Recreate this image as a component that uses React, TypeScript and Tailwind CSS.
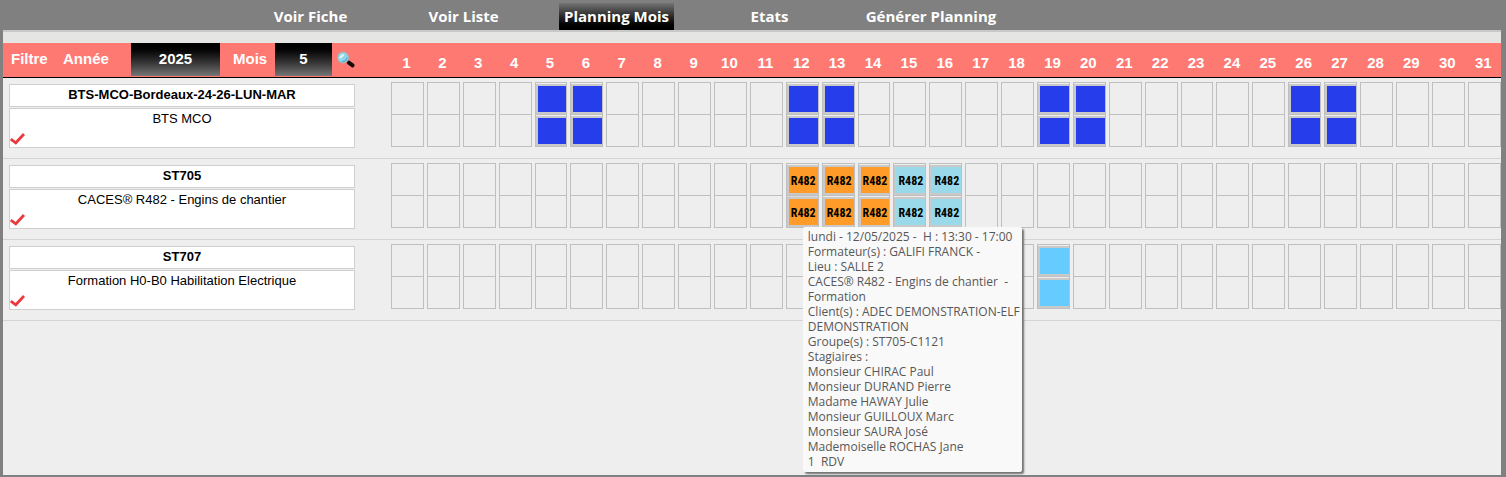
import { useState } from 'react';
import clsx from 'clsx';

type SlotKind = 'course' | 'caces' | 'cacesAlt' | 'habilitation';

interface Slot {
  kind: SlotKind;
  label?: string;
}

interface Group {
  code: string;
  title: string;
  slots: Record<number, Slot>;
  hoveredDay?: number;
}

const MENU = [
  { label: 'Voir Fiche', width: 'w-[153px]' },
  { label: 'Voir Liste', width: 'w-[153px]' },
  { label: 'Planning Mois', width: 'w-[153px]' },
  { label: 'Etats', width: 'w-[153px]' },
  { label: 'Générer Planning', width: 'w-[170px]' },
];

const DAYS = Array.from({ length: 31 }, (_, i) => i + 1);
const HALF_DAYS = ['am', 'pm'];

const SLOT_COLORS: Record<SlotKind, string> = {
  course: 'bg-[#263dec]',
  caces: 'bg-[#ff9b28]',
  cacesAlt: 'bg-[#99d9ea]',
  habilitation: 'bg-[#66ccff]',
};

const course: Slot = { kind: 'course' };
const caces: Slot = { kind: 'caces', label: 'R482' };
const cacesAlt: Slot = { kind: 'cacesAlt', label: 'R482' };

const GROUPS: Group[] = [
  {
    code: 'BTS-MCO-Bordeaux-24-26-LUN-MAR',
    title: 'BTS MCO',
    slots: { 5: course, 6: course, 12: course, 13: course, 19: course, 20: course, 26: course, 27: course },
  },
  {
    code: 'ST705',
    title: 'CACES® R482 - Engins de chantier',
    slots: { 12: caces, 13: caces, 14: caces, 15: cacesAlt, 16: cacesAlt },
    hoveredDay: 12,
  },
  {
    code: 'ST707',
    title: 'Formation H0-B0 Habilitation Electrique',
    slots: { 19: { kind: 'habilitation' } },
  },
];

const TOOLTIP_LINES = [
  'lundi - 12/05/2025 -  H : 13:30 - 17:00',
  'Formateur(s) : GALIFI FRANCK -',
  'Lieu : SALLE 2',
  'CACES® R482 - Engins de chantier  -',
  'Formation',
  'Client(s) : ADEC DEMONSTRATION-ELF',
  'DEMONSTRATION',
  'Groupe(s) : ST705-C1121',
  'Stagiaires :',
  'Monsieur CHIRAC Paul',
  'Monsieur DURAND Pierre',
  'Madame HAWAY Julie',
  'Monsieur GUILLOUX Marc',
  'Monsieur SAURA José',
  'Mademoiselle ROCHAS Jane',
  '1  RDV',
];

function SearchIcon() {
  return (
    <svg className="h-[18px] w-5" viewBox="0 0 20 18" fill="none">
      <path d="M10.500 9.500l2.500 2" stroke="#9a8a8a" strokeWidth="1.600" />
      <path d="M12.800 11.600l3.800 2.800" stroke="#140c0c" strokeWidth="4" strokeLinecap="round" />
      <circle cx="7" cy="6.500" r="5.400" fill="#8fd6ea" stroke="#a9b4b8" strokeWidth="1.200" />
      <path d="M3.200 7.700c.2-2.800 2.200-4.800 5.200-4.800-.6 2.400-2.400 4.200-5.200 4.800z" fill="#dff6fc" />
      <path d="M5.500 10.500c3 .4 5-1.200 5.600-4" stroke="#4fb4d2" strokeWidth="1.200" />
    </svg>
  );
}

function CheckIcon() {
  return (
    <svg className="h-3 w-[15px]" viewBox="0 0 15 12" fill="none">
      <path d="M.8 6L5.800 9.800L14 1" stroke="#ea3a40" strokeWidth="2.800" />
    </svg>
  );
}

function MenuBar() {
  return (
    <nav className="flex h-8 items-end border-b-2 border-[#c8c8c8] bg-[#808080] pl-[231px]">
      {MENU.map(({ label, width }) => (
        <div key={label} className={clsx('flex justify-center', width)}>
          <a
            href="#"
            className={clsx(
              'h-[27px] px-[5px] text-[15px] leading-[27px] font-bold whitespace-nowrap text-white',
              label === 'Planning Mois' && 'bg-linear-to-b from-[#757575] to-black',
            )}
          >
            {label}
          </a>
        </div>
      ))}
    </nav>
  );
}

function Filters() {
  const [year, setYear] = useState('2025');
  const [month, setMonth] = useState('5');
  const selectClass =
    'h-full appearance-none bg-linear-to-b from-black to-[#757575] text-center [text-align-last:center]';

  return (
    <form className="flex h-[33px] items-center pl-2 text-[15px] font-bold text-white">
      <span className="w-[52px]">Filtre</span>
      <label htmlFor="year" className="w-[68px]">
        Année
      </label>
      <select
        id="year"
        value={year}
        onChange={(e) => setYear(e.target.value)}
        className={clsx(selectClass, 'w-[89px]')}
      >
        <option>2024</option>
        <option>2025</option>
        <option>2026</option>
      </select>
      <label htmlFor="month" className="w-[55px] pl-[13px]">
        Mois
      </label>
      <select
        id="month"
        value={month}
        onChange={(e) => setMonth(e.target.value)}
        className={clsx(selectClass, 'w-[57px]')}
      >
        {DAYS.slice(0, 12).map((m) => (
          <option key={m}>{m}</option>
        ))}
      </select>
      <button type="button" className="pl-1">
        <SearchIcon />
      </button>
    </form>
  );
}

function Tooltip() {
  return (
    <div
      role="tooltip"
      className="absolute top-full left-4 z-10 w-[219px] rounded-xs bg-[#f9f9f9] pt-0.5 pb-[3px] pl-[5px] font-['Open_Sans','Noto_Sans',sans-serif] text-xs leading-[15px] whitespace-pre text-[#575757] shadow-[2px_2px_2px_#707070]"
    >
      {TOOLTIP_LINES.map((line) => (
        <p key={line}>{line}</p>
      ))}
    </div>
  );
}

function DayCell({ slot, hovered }: { slot?: Slot; hovered: boolean }) {
  return (
    <div className="relative border border-[#bfbfbf]">
      {HALF_DAYS.map((half, i) => (
        <div
          key={half}
          className={clsx(
            'flex',
            i === 0 ? 'h-8 border-b border-[#bfbfbf]' : 'h-[31px]',
            hovered && i === 1 && 'bg-linear-to-b from-[#dcdcdc] to-[#909090]',
          )}
        >
          {slot && (
            <div
              className={clsx(
                "mt-px flex flex-1 items-center justify-center border-y-2 border-l-2 border-[#c9c9c9] pt-px font-['Liberation_Sans_Narrow','Roboto_Condensed','Liberation_Sans',sans-serif] text-xs font-bold text-black",
                SLOT_COLORS[slot.kind],
              )}
            >
              {slot.label}
            </div>
          )}
        </div>
      ))}
      {hovered && <Tooltip />}
    </div>
  );
}

function PlanningTable() {
  return (
    <table className="w-full table-fixed border-separate border-spacing-0">
      <colgroup>
        <col className="w-[385px]" />
        {DAYS.map((day) => (
          <col key={day} />
        ))}
      </colgroup>
      <thead>
        <tr className="bg-[#ff7973]">
          <th className="h-[35px] border-b border-black p-0 pb-px text-left">
            <Filters />
          </th>
          {DAYS.map((day) => (
            <th
              key={day}
              className="border-b border-black p-0 pt-[7px] pl-px text-center text-[15px] font-bold text-white"
            >
              {day}
            </th>
          ))}
        </tr>
      </thead>
      <tbody>
        {GROUPS.map((group) => (
          <tr key={group.code}>
            <th className="h-[81px] border-b border-[#d4d4d4] pt-1.5 pr-[33px] pb-0 pl-1.5 align-top text-[13px] font-normal text-black">
              <div className="h-[23px] border border-[#cfcfcf] bg-white leading-5 font-bold">{group.code}</div>
              <div className="relative mt-px h-10 border border-[#cfcfcf] bg-white leading-5">
                {group.title}
                <CheckMark />
              </div>
            </th>
            {DAYS.map((day) => (
              <td key={day} className="border-b border-[#d4d4d4] pt-1 pr-0 pb-0 pl-[3px] align-top">
                <DayCell slot={group.slots[day]} hovered={group.hoveredDay === day} />
              </td>
            ))}
          </tr>
        ))}
      </tbody>
    </table>
  );
}

function CheckMark() {
  return (
    <span className="absolute bottom-0.5 left-0 flex">
      <CheckIcon />
    </span>
  );
}

export default function App() {
  return (
    <div className="flex min-h-screen flex-col border-r-[5px] border-b-2 border-l-[3px] border-[#808080] bg-[#eeeeee] font-['Liberation_Sans',Arial,sans-serif]">
      <header className="bg-[#e5e5e3] pb-[11px] font-['Open_Sans','Noto_Sans',sans-serif]">
        <MenuBar />
      </header>
      <main>
        <PlanningTable />
      </main>
    </div>
  );
}
